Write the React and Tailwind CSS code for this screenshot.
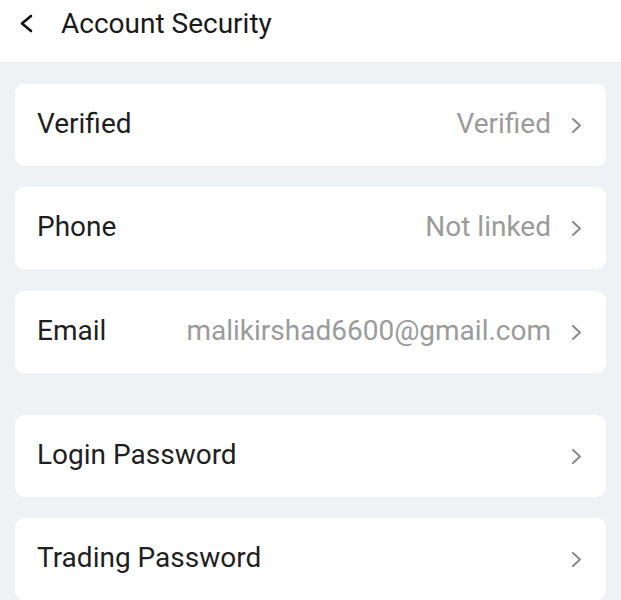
import React from 'react'

const font = { fontFamily: 'Roboto, "Noto Sans", sans-serif' }

function Chevron({ className }) {
  return (
    <svg viewBox="0 0 11 17" className={className} fill="none" stroke="currentColor" strokeWidth="2" strokeLinecap="round" strokeLinejoin="round">
      <path d="M2 2l7 6.5-7 6.5" />
    </svg>
  )
}

function Row({ label, value, mt }) {
  return (
    <div className={`mx-[15px] ${mt} h-[82px] bg-white rounded-[9px] flex items-center pl-[22px] pr-[24px]`}>
      <span className="text-[28px] leading-none text-[#1f1f1f] flex-1 -mt-[2px]">{label}</span>
      {value && <span className="text-[28px] leading-none text-[#9b9b9b] mr-[20px] -mt-[2px]">{value}</span>}
      {!value && <span className="mr-[20px]" />}
      <Chevron className="w-[11px] h-[17px] text-[#8a8a8a] mt-[1px]" />
    </div>
  )
}

export default function App() {
  return (
    <div className="w-[621px] h-[600px] bg-[#f0f1f5] overflow-hidden" style={font}>
      {/* Header */}
      <div className="h-[62px] bg-white flex items-start pt-[8px] pl-[19px]">
        <svg viewBox="0 0 14 19" className="w-[14px] h-[19px] text-[#111] mt-[6px]" fill="none" stroke="currentColor" strokeWidth="2.6" strokeLinecap="round" strokeLinejoin="round">
          <path d="M12 2L3 9.5l9 7.5" />
        </svg>
        <span className="ml-[28px] text-[28px] leading-[32px] text-[#1a1a1a]">Account Security</span>
      </div>

      <Row label="Verified" value="Verified" mt="mt-[22px]" />
      <Row label="Phone" value="Not linked" mt="mt-[21px]" />
      <Row label="Email" value="malikirshad6600@gmail.com" mt="mt-[22px]" />
      <Row label="Login Password" mt="mt-[42px]" />
      <Row label="Trading Password" mt="mt-[21px]" />
    </div>
  )
}
